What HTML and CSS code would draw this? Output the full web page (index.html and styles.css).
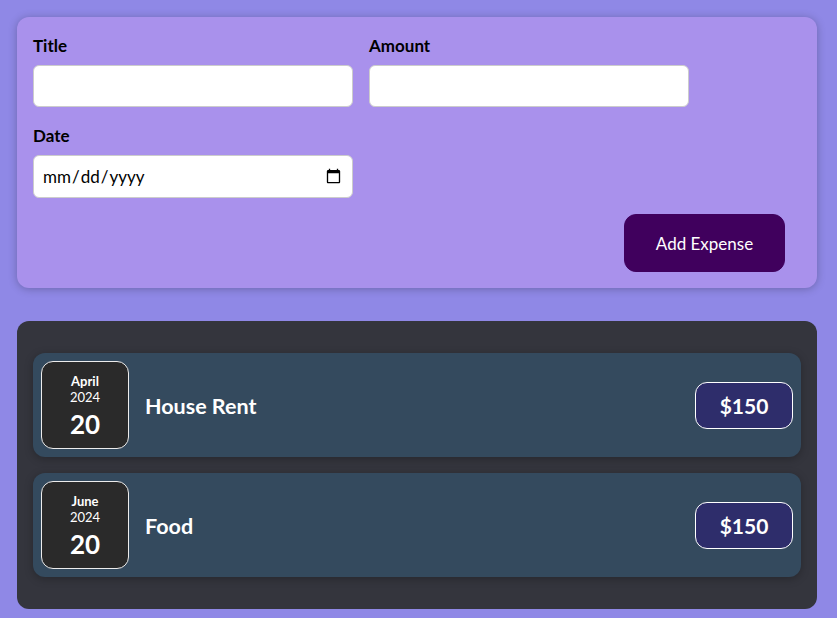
FILE: index.html
```
<!DOCTYPE html>
<html lang="en">
<head>
<meta charset="utf-8">
<title>Expenses</title>
<link rel="stylesheet" href="styles.css">
</head>
<body>
<div class="new-expense">
  <form>
    <div class="controls">
      <div class="control">
        <label>Title</label>
        <input type="text">
      </div>
      <div class="control">
        <label>Amount</label>
        <input type="number">
      </div>
      <div class="control">
        <label>Date</label>
        <input type="date" class="date-input">
      </div>
    </div>
    <div class="actions">
      <button type="button">Add Expense</button>
    </div>
  </form>
</div>
<div class="expenses">
  <div class="expense-item">
    <div class="expense-date">
      <div class="month">April</div>
      <div class="year">2024</div>
      <div class="day">20</div>
    </div>
    <div class="description">
      <h2>House Rent</h2>
      <div class="price">$150</div>
    </div>
  </div>
  <div class="expense-item">
    <div class="expense-date">
      <div class="month">June</div>
      <div class="year">2024</div>
      <div class="day">20</div>
    </div>
    <div class="description">
      <h2>Food</h2>
      <div class="price">$150</div>
    </div>
  </div>
</div>
</body>
</html>
```
FILE: styles.css
```
* { box-sizing: border-box; }
html, body {
  margin: 0;
  background-color: #8f88e6;
  font-family: Lato, "Noto Sans", sans-serif;
  min-height: 100%;
}
body { padding: 17px 20px 1px 17px; }
.new-expense {
  background-color: #a991ec;
  padding: 16px;
  width: 800px;
  border-radius: 12px;
  box-shadow: 0 1px 8px rgba(0,0,0,0.25);
}
.controls {
  display: flex;
  flex-wrap: wrap;
  gap: 16px;
  margin-bottom: 16px;
  width: 656px;
}
.control label {
  display: block;
  font-weight: bold;
  font-size: 17px;
  line-height: 25px;
  margin-bottom: 7px;
  color: #000;
}
.control input {
  font: inherit;
  font-size: 17px;
  width: 320px;
  height: 42px;
  padding: 8px;
  border: 1px solid #ccc;
  border-radius: 6px;
  background: #fff;
}
.control .date-input { height: 43px; }
.actions { display: flex; justify-content: flex-end; }
.actions button {
  font: inherit;
  font-size: 17px;
  width: 161px;
  height: 58px;
  margin-right: 16px;
  border: 1px solid #40005d;
  background-color: #40005d;
  color: #fff;
  border-radius: 12px;
}
.expenses {
  margin-top: 33px;
  width: 800px;
  padding: 16px;
  background-color: #34353d;
  border-radius: 12px;
}
.expense-item {
  display: flex;
  align-items: center;
  padding: 8px;
  margin: 16px 0;
  height: 104px;
  border-radius: 12px;
  background-color: #344a5e;
  box-shadow: 0 2px 8px rgba(0,0,0,0.25);
}
.expense-date {
  display: flex;
  flex-direction: column;
  align-items: center;
  justify-content: center;
  width: 88px;
  height: 88px;
  padding-top: 2px;
  border: 1px solid #ececec;
  background-color: #2a2a2a;
  color: #fff;
  border-radius: 12px;
}
.month { font-size: 13px; font-weight: bold; line-height: 16px; margin-top: 2px; }
.year { font-size: 13px; line-height: 16px; }
.day { font-size: 26px; font-weight: bold; line-height: 34px; margin-top: 2px; }
.description {
  flex: 1;
  display: flex;
  align-items: center;
  justify-content: space-between;
}
.description h2 {
  margin: 2px 16px 0;
  font-size: 21.5px;
  color: #fff;
}
.price {
  font-size: 21px;
  font-weight: bold;
  color: #fff;
  background-color: #2e2d6b;
  border: 1px solid #fff;
  border-radius: 12px;
  width: 98px;
  height: 47px;
  display: flex;
  align-items: center;
  justify-content: center;
}
```
